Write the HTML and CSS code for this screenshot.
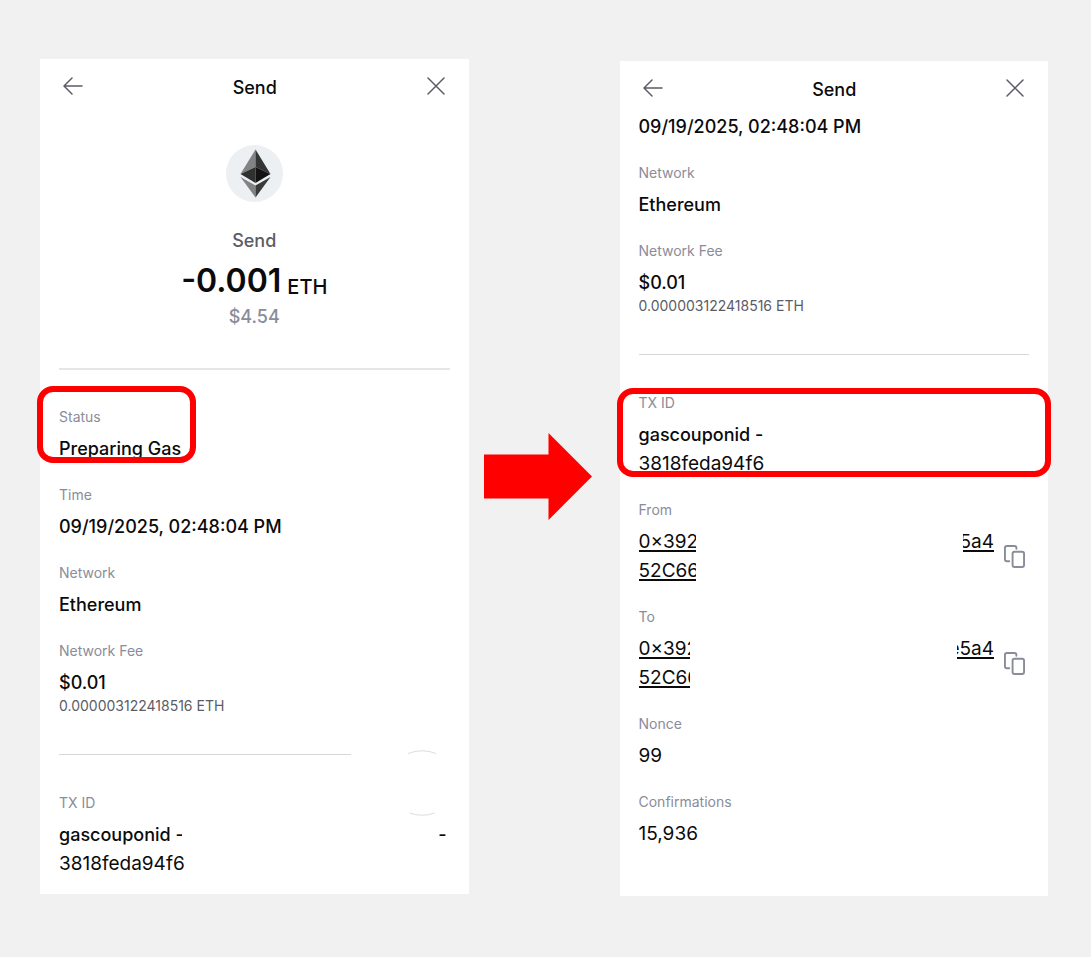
FILE: index.html
```html
<!DOCTYPE html>
<html lang="en">
<head>
<meta charset="utf-8">
<meta name="viewport" content="width=device-width, initial-scale=1">
<title>Send</title>
<link rel="stylesheet" href="styles.css">
</head>
<body>
<main class="page">
  <section class="panel">
    <header class="header">
      <button class="icon-button" type="button" aria-label="Back"><svg width="20" height="18" viewBox="0 0 20 18"><path d="M19 9H1M9 1L1 9l8 8"/></svg></button>
      <h1 class="title">Send</h1>
      <button class="icon-button" type="button" aria-label="Close"><svg width="18" height="18" viewBox="0 0 18 18"><path d="M1 1l16 16M17 1L1 17"/></svg></button>
    </header>
    <div class="hero">
      <svg class="coin" width="57" height="57" viewBox="0 0 57 57" aria-hidden="true">
        <circle cx="28.5" cy="28.500" r="28.500" fill="#ecf0f2"/>
        <path fill="#828384" d="M29.500 4.500v17.500L14.500 29z"/>
        <path fill="#343535" d="M29.500 4.500L44.500 29l-15-7z"/>
        <path fill="#2f3030" d="M29.500 22v16L14.500 29z"/>
        <path fill="#131313" d="M29.500 22l15 7-15 9z"/>
        <path fill="#828384" d="M14.500 32l15 8.500v12z"/>
        <path fill="#393a3a" d="M44.500 32l-15 8.500v12z"/>
      </svg>
      <p class="kind">Send</p>
      <p class="amount"><span class="amount-value">-0.001</span><span class="amount-unit">ETH</span></p>
      <p class="fiat">$4.54</p>
    </div>
    <hr class="divider divider-bold">
    <dl class="details">
      <div class="row"><dt>Status</dt><dd>Preparing Gas</dd><span class="highlight highlight-status"></span></div>
      <div class="row"><dt>Time</dt><dd>09/19/2025, 02:48:04 PM</dd></div>
      <div class="row"><dt>Network</dt><dd>Ethereum</dd></div>
      <div class="row"><dt>Network Fee</dt><dd>$0.01</dd><dd class="sub">0.000003122418516 ETH</dd></div>
    </dl>
    <hr class="divider divider-short">
    <dl class="details">
      <div class="row">
        <dt>TX ID</dt>
        <dd class="split"><span class="clip clip-tx">gascouponid -</span><span class="tail">-</span></dd>
        <dd class="code">3818feda94f6</dd>
        <svg class="ring" width="66" height="66" viewBox="0 0 66 66" aria-hidden="true"><path d="M19 3.500Q33-2 47 3.500M20.500 63Q33 67.500 45.500 63"/></svg>
      </div>
    </dl>
  </section>

  <svg class="arrow" width="108" height="87" viewBox="0 0 108 87" aria-hidden="true"><path d="M0 21.500h64.500V0L108 43.500 64.500 87V65.500H0z"/></svg>

  <section class="panel panel-scrolled">
    <header class="header">
      <button class="icon-button" type="button" aria-label="Back"><svg width="20" height="18" viewBox="0 0 20 18"><path d="M19 9H1M9 1L1 9l8 8"/></svg></button>
      <h2 class="title">Send</h2>
      <button class="icon-button" type="button" aria-label="Close"><svg width="18" height="18" viewBox="0 0 18 18"><path d="M1 1l16 16M17 1L1 17"/></svg></button>
    </header>
    <dl class="details details-scrolled">
      <div class="row"><dd>09/19/2025, 02:48:04 PM</dd></div>
      <div class="row"><dt>Network</dt><dd>Ethereum</dd></div>
      <div class="row"><dt>Network Fee</dt><dd>$0.01</dd><dd class="sub">0.000003122418516 ETH</dd></div>
    </dl>
    <hr class="divider">
    <dl class="details">
      <div class="row"><dt>TX ID</dt><dd>gascouponid -</dd><dd class="code">3818feda94f6</dd><span class="highlight highlight-tx"></span></div>
      <div class="row">
        <dt>From</dt>
        <dd class="address code">
          <a class="link" href="#from"><span class="clip clip-from">0×392<br>52C66</span><span class="clip clip-from-end">5a4</span></a>
          <button class="icon-button copy" type="button" aria-label="Copy sender"><svg width="21" height="23" viewBox="0 0 22 24"><path d="M5.500 17H3a2 2 0 0 1-2-2V3a2 2 0 0 1 2-2h8a2 2 0 0 1 2 2v1"/><rect x="9" y="7" width="12" height="16" rx="2"/></svg></button>
        </dd>
      </div>
      <div class="row">
        <dt>To</dt>
        <dd class="address code">
          <a class="link" href="#to"><span class="clip clip-to">0×392<br>52C66</span><span class="clip clip-to-end">e5a4</span></a>
          <button class="icon-button copy" type="button" aria-label="Copy recipient"><svg width="21" height="23" viewBox="0 0 22 24"><path d="M5.500 17H3a2 2 0 0 1-2-2V3a2 2 0 0 1 2-2h8a2 2 0 0 1 2 2v1"/><rect x="9" y="7" width="12" height="16" rx="2"/></svg></button>
        </dd>
      </div>
      <div class="row"><dt>Nonce</dt><dd class="code">99</dd></div>
      <div class="row"><dt>Confirmations</dt><dd class="code">15,936</dd></div>
    </dl>
  </section>
</main>
</body>
</html>
```
FILE: styles.css
```css
* {
  box-sizing: border-box;
}

body {
  margin: 0;
  background: #f1f1f1;
  color: #0b0b0c;
  font-family: Inter, "Liberation Sans", sans-serif;
  font-size: 18px;
  line-height: 29px;
  font-weight: 500;
}

h1, h2, p, dl, dd {
  margin: 0;
}

.page {
  display: grid;
  grid-template-columns: 1fr auto 1fr;
  align-items: start;
  padding: 59px 43px 61px 40px;
}

.panel {
  padding: 0 19px 16px;
  background: #fff;
}

.panel-scrolled {
  margin-top: 2px;
  padding-bottom: 48px;
}

.arrow {
  align-self: center;
  margin: 0 28px 2px 15px;
  fill: #f00;
}

.header {
  display: flex;
  align-items: center;
  justify-content: space-between;
  padding: 15px 5px 0 4px;
}

.title {
  font-size: 18px;
  font-weight: 500;
  line-height: 28px;
}

.icon-button {
  display: flex;
  padding: 0;
  border: 0;
  background: none;
  cursor: pointer;
}

.icon-button svg {
  fill: none;
  stroke: #5b5c66;
  stroke-width: 1.5;
  stroke-linecap: round;
  stroke-linejoin: round;
}

.header .icon-button {
  padding-bottom: 4px;
}

.hero {
  display: flex;
  flex-direction: column;
  align-items: center;
  padding-top: 43px;
}

.coin {
  margin-bottom: 25px;
}

.kind,
.fiat {
  line-height: 28px;
}

.kind {
  color: #5b5c66;
}

.amount {
  display: flex;
  align-items: flex-end;
  gap: 6px;
  margin-top: 3px;
}

.amount-value {
  font-size: 32px;
  font-weight: 600;
  line-height: 45px;
}

.amount-unit {
  font-size: 20px;
  line-height: 32px;
}

.fiat {
  color: #8b8c99;
}

.divider {
  height: 1px;
  margin: 39px 0 38px;
  border: 0;
  background: #d8d8dc;
}

.divider-bold {
  height: 2px;
  margin: 37px 0;
  background: #e6e6e9;
}

.divider-short {
  margin-right: 99px;
}

.details {
  display: flex;
  flex-direction: column;
  gap: 22px;
}

.details-scrolled {
  padding-top: 8px;
}

.row {
  position: relative;
}

dt {
  margin-bottom: 7px;
  font-size: 14px;
  font-weight: 400;
  line-height: 20px;
  color: #8b8c99;
}

.sub {
  font-size: 14px;
  font-weight: 400;
  line-height: 18px;
  color: #5b5c66;
}

.code {
  font-size: 19px;
  font-weight: 400;
}

.split,
.address,
.link {
  display: flex;
  justify-content: space-between;
}

.clip {
  overflow: hidden;
  white-space: nowrap;
}

.clip-tx {
  width: 123px;
}

.tail {
  padding-right: 3px;
}

.address {
  align-items: center;
  gap: 10px;
  padding-right: 4px;
}

.link {
  flex: 1;
  color: inherit;
  text-decoration: underline;
  text-decoration-thickness: 2px;
  text-underline-offset: 2px;
}

.clip-from {
  width: 57px;
}

.clip-to {
  width: 51px;
}

.clip-from-end,
.clip-to-end {
  display: flex;
  justify-content: flex-end;
}

.clip-from-end {
  width: 31px;
}

.clip-to-end {
  width: 37px;
}

.copy svg {
  stroke: #8b8c99;
  stroke-width: 2;
}

.highlight {
  position: absolute;
  left: -22px;
  border: 6px solid #f00;
  border-radius: 16px;
  pointer-events: none;
}

.highlight-status {
  top: -21px;
  width: 159px;
  height: 77px;
}

.highlight-tx {
  top: -5px;
  right: -22px;
  height: 89px;
}

.ring {
  position: absolute;
  top: -43px;
  right: -5px;
  fill: none;
  stroke: #dddde0;
}
```
